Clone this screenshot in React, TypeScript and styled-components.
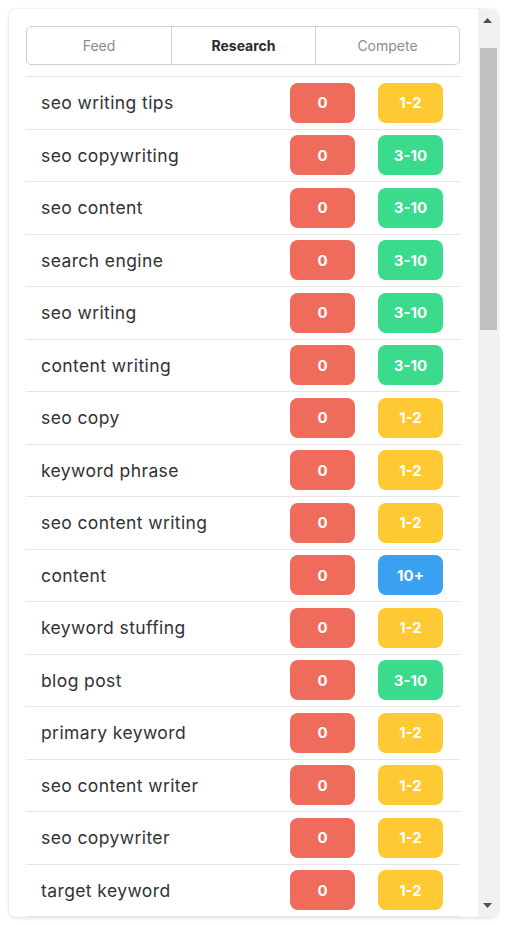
import React from "react";
import styled, { createGlobalStyle } from "styled-components";

const GlobalStyle = createGlobalStyle`
  html, body {
    margin: 0;
    padding: 0;
    background: #ffffff;
    font-family: Inter, "Noto Sans", "Liberation Sans", sans-serif;
  }
  * { box-sizing: border-box; }
`;

type Level = "low" | "mid" | "high";

const rows: [string, Level][] = [
  ["seo writing tips", "low"],
  ["seo copywriting", "mid"],
  ["seo content", "mid"],
  ["search engine", "mid"],
  ["seo writing", "mid"],
  ["content writing", "mid"],
  ["seo copy", "low"],
  ["keyword phrase", "low"],
  ["seo content writing", "low"],
  ["content", "high"],
  ["keyword stuffing", "low"],
  ["blog post", "mid"],
  ["primary keyword", "low"],
  ["seo content writer", "low"],
  ["seo copywriter", "low"],
  ["target keyword", "low"],
];

const levelText: Record<Level, string> = { low: "1-2", mid: "3-10", high: "10+" };
const levelColor: Record<Level, string> = {
  low: "#ffc933",
  mid: "#3adb8c",
  high: "#3aa0f2",
};

export default function App() {
  return (
    <>
      <GlobalStyle />
      <Card>
        <Content>
          <Tabs>
            <Tab>Feed</Tab>
            <Tab $active>Research</Tab>
            <Tab>Compete</Tab>
          </Tabs>
          <List>
            {rows.map(([word, level]) => (
              <Row key={word}>
                <Keyword>{word}</Keyword>
                <Badge $color="#ef6b5b">0</Badge>
                <Badge $color={levelColor[level]}>{levelText[level]}</Badge>
              </Row>
            ))}
          </List>
        </Content>
        <ScrollBar>
          <ArrowButton $down={false}>
            <svg width="9" height="5" viewBox="0 0 9 5">
              <path d="M0 5 L4.5 0 L9 5 Z" fill="#505050" />
            </svg>
          </ArrowButton>
          <Track>
            <Thumb />
          </Track>
          <ArrowButton $down>
            <svg width="9" height="5" viewBox="0 0 9 5">
              <path d="M0 0 L4.5 5 L9 0 Z" fill="#505050" />
            </svg>
          </ArrowButton>
        </ScrollBar>
      </Card>
    </>
  );
}

const Card = styled.div`
  margin: 9px;
  width: 489px;
  height: 908px;
  background: #ffffff;
  border-radius: 7px;
  overflow: hidden;
  display: flex;
  box-shadow: 0 1px 4px rgba(0, 0, 0, 0.14), 0 0 1px rgba(0, 0, 0, 0.1);
`;

const Content = styled.div`
  flex: 1;
  min-width: 0;
  overflow: hidden;
  padding: 17px 18px 0 17px;
`;

const ScrollBar = styled.div`
  flex: none;
  width: 20px;
  display: flex;
  flex-direction: column;
  background: #f1f1f1;
`;

const ArrowButton = styled.div<{ $down: boolean }>`
  flex: none;
  height: 39px;
  display: flex;
  justify-content: center;
  align-items: ${(p) => (p.$down ? "flex-end" : "flex-start")};
  padding: ${(p) => (p.$down ? "0 1px 9px 0" : "9px 1px 0 0")};
  svg { display: block; }
`;

const Track = styled.div`
  flex: 1;
  padding: 0 1px 0 2px;
`;

const Thumb = styled.div`
  height: 282px;
  background: #c1c1c1;
`;

const Tabs = styled.div`
  display: grid;
  grid-template-columns: 1fr 1fr 1fr;
  height: 39px;
  border: 1px solid #cfcfcf;
  border-radius: 5px;
  overflow: hidden;
`;

const Tab = styled.div<{ $active?: boolean }>`
  display: flex;
  align-items: center;
  justify-content: center;
  font-size: 14px;
  color: ${(p) => (p.$active ? "#2b2b2b" : "#8c8c8c")};
  font-weight: ${(p) => (p.$active ? 700 : 400)};
  & + & {
    border-left: 1px solid #cfcfcf;
  }
`;

const List = styled.div`
  margin-top: 11px;
  border-top: 1px solid #e6e6e6;
`;

const Row = styled.div`
  display: flex;
  align-items: center;
  gap: 23px;
  height: 52.5px;
  padding: 0 17px 0 15px;
  border-bottom: 1px solid #e6e6e6;
`;

const Keyword = styled.div`
  flex: 1;
  font-size: 17.5px;
  letter-spacing: 0.4px;
  color: #303236;
  white-space: nowrap;
  overflow: hidden;
`;

const Badge = styled.div<{ $color: string }>`
  flex: none;
  width: 65px;
  height: 40px;
  border-radius: 8px;
  background: ${(p) => p.$color};
  color: #ffffff;
  font-size: 15px;
  font-weight: 700;
  display: flex;
  align-items: center;
  justify-content: center;
`;
